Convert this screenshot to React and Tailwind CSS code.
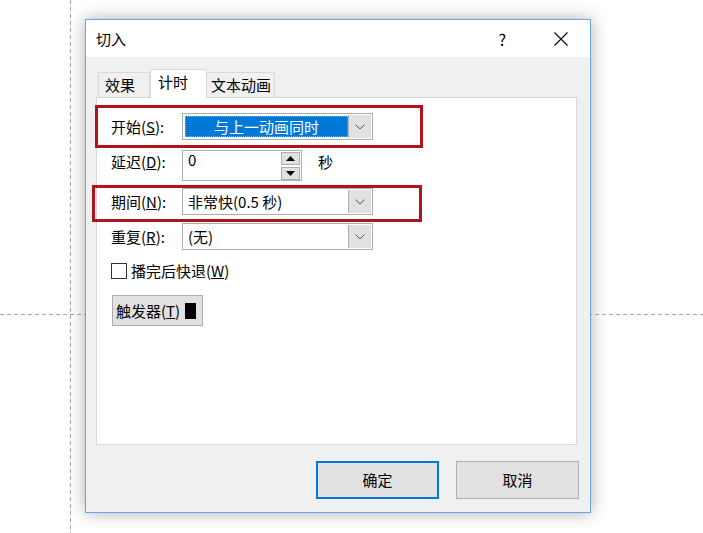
import React from 'react';

const font = { fontFamily: '"Noto Sans CJK SC", "Noto Sans", sans-serif' };

// 下拉箭头
const Chevron = () => (
  <svg width="10" height="6" viewBox="0 0 10 6">
    <polyline points="0.5,0.5 5,5 9.5,0.5" fill="none" stroke="#555" strokeWidth="1" />
  </svg>
);

const DropButton = () => (
  <div className="w-[23px] h-full bg-[#e1e1e1] border-l border-[#adadad] flex items-center justify-center">
    <Chevron />
  </div>
);

const Label = ({ text, k }) => (
  <div className="w-[71px] shrink-0 text-[15px] leading-[20px] text-black">
    {text}(<span className="underline">{k}</span>):
  </div>
);

const Combo = ({ value, focused }) => (
  <div className="w-[191px] h-[27px] border border-[#adadad] bg-white flex">
    {focused ? (
      <div className="flex-1 p-[2px] pr-0">
        <div className="h-full bg-[#0078d7] border border-dotted border-[#e0a040] flex items-center justify-center text-white text-[15px] leading-[20px]">
          {value}
        </div>
      </div>
    ) : (
      <div className="flex-1 pl-[5px] flex items-center text-[15px] leading-[20px] text-black">{value}</div>
    )}
    <div className="py-px pr-px">
      <DropButton />
    </div>
  </div>
);

const Arrow = ({ up }) => (
  <svg width="9" height="5" viewBox="0 0 9 5">
    <polygon points={up ? '0,5 9,5 4.5,0' : '0,0 9,0 4.5,5'} fill="#000" />
  </svg>
);

export default function App() {
  return (
    <div className="relative w-[703px] h-[533px] bg-white overflow-hidden" style={font}>
      {/* 参考线 */}
      <div className="absolute left-[70px] top-0 w-px h-full bg-[repeating-linear-gradient(to_bottom,#a6a6a6_0_4px,transparent_4px_7px)]" />
      <div className="absolute left-0 top-[314px] h-px w-full bg-[repeating-linear-gradient(to_right,#a6a6a6_0_4px,transparent_4px_7px)]" />

      <div className="relative pl-[85px] pt-[19px]">
        <div className="w-[506px] h-[494px] border border-[#64a6ea] bg-[#f0f0f0] flex flex-col shadow-[0_0_16px_rgba(0,0,0,0.32)]">
          {/* 标题栏 */}
          <div className="h-[37px] bg-white flex items-center pl-[10px] text-[15px] text-black">
            <span className="leading-[20px]">切入</span>
            <span className="ml-auto mr-[48px] text-[16px] leading-[20px]">?</span>
            <svg className="mr-[22px]" width="14" height="14" viewBox="0 0 14 14">
              <path d="M0.5 0.5 L13.5 13.5 M13.5 0.5 L0.5 13.5" stroke="#000" strokeWidth="1.1" />
            </svg>
          </div>

          <div className="flex-1 pl-[10px] pr-[12px] pt-[12px] flex flex-col">
            {/* 选项卡 */}
            <div className="flex items-end h-[28px] pl-[2px] text-[15px] text-black">
              <div className="w-[52px] h-[25px] pl-[6px] border border-b-0 border-[#d9d9d9] bg-[#f0f0f0] leading-[24px]">效果</div>
              <div className="relative z-10 w-[57px] h-[29px] -mb-px pl-[7px] border border-b-0 border-[#d9d9d9] bg-white leading-[24px]">计时</div>
              <div className="w-[68px] h-[25px] pl-[4px] border border-b-0 border-l-0 border-[#d9d9d9] bg-[#f0f0f0] leading-[24px]">文本动画</div>
            </div>

            {/* 面板 */}
            <div className="relative w-[481px] h-[348px] border border-[#d9d9d9] bg-white pl-[14px] pt-[15px]">
              <div className="flex items-center">
                <Label text="开始" k="S" />
                <Combo value="与上一动画同时" focused />
              </div>

              <div className="flex items-start mt-[10px]">
                <div className="pt-[2px]"><Label text="延迟" k="D" /></div>
                <div className="w-[120px] h-[31px] border border-[#adadad] bg-white flex">
                  <div className="flex-1 pl-[5px] text-[15px] leading-[18px] text-black">0</div>
                  <div className="flex flex-col gap-[2px] pt-px pr-px">
                    <div className="w-[19px] h-[13px] bg-[#e1e1e1] border border-[#adadad] flex items-center justify-center"><Arrow up /></div>
                    <div className="w-[19px] h-[13px] bg-[#e1e1e1] border border-[#adadad] flex items-center justify-center"><Arrow /></div>
                  </div>
                </div>
                <div className="ml-[16px] pt-[2px] text-[15px] leading-[20px] text-black">秒</div>
              </div>

              <div className="flex items-center mt-[7px]">
                <Label text="期间" k="N" />
                <Combo value="非常快(0.5 秒)" />
              </div>

              <div className="flex items-center mt-[8px]">
                <Label text="重复" k="R" />
                <Combo value="(无)" />
              </div>

              <div className="flex items-center mt-[11px]">
                <div className="w-[16px] h-[16px] border border-[#333] bg-white" />
                <div className="ml-[4px] text-[15px] leading-[20px] text-black">
                  播完后快退(<span className="underline">W</span>)
                </div>
              </div>

              <div className="mt-[14px] ml-px w-[91px] h-[31px] bg-[#e1e1e1] border border-[#adadad] flex items-center pl-[3px] text-[15px] leading-[20px] text-black">
                触发器(<span className="underline">T</span>)
                <div className="ml-[5px] w-[11px] h-[16px] bg-black" />
              </div>

              {/* 红色标注框 */}
              <div className="absolute left-[-2px] top-[7px] w-[328px] h-[43px] border-[3px] border-[#b0141b]" />
              <div className="absolute left-[-5px] top-[87px] w-[330px] h-[37px] border-[3px] border-[#b0141b]" />
            </div>

            {/* 按钮 */}
            <div className="flex justify-end gap-[17px] mt-[16px] -mr-px">
              <div className="w-[123px] h-[38px] border-2 border-[#0078d7] bg-[#e1e1e1] flex items-center justify-center text-[15px] text-black">确定</div>
              <div className="w-[123px] h-[38px] border border-[#adadad] bg-[#e1e1e1] flex items-center justify-center text-[15px] text-black">取消</div>
            </div>
          </div>
        </div>
      </div>
    </div>
  );
}
